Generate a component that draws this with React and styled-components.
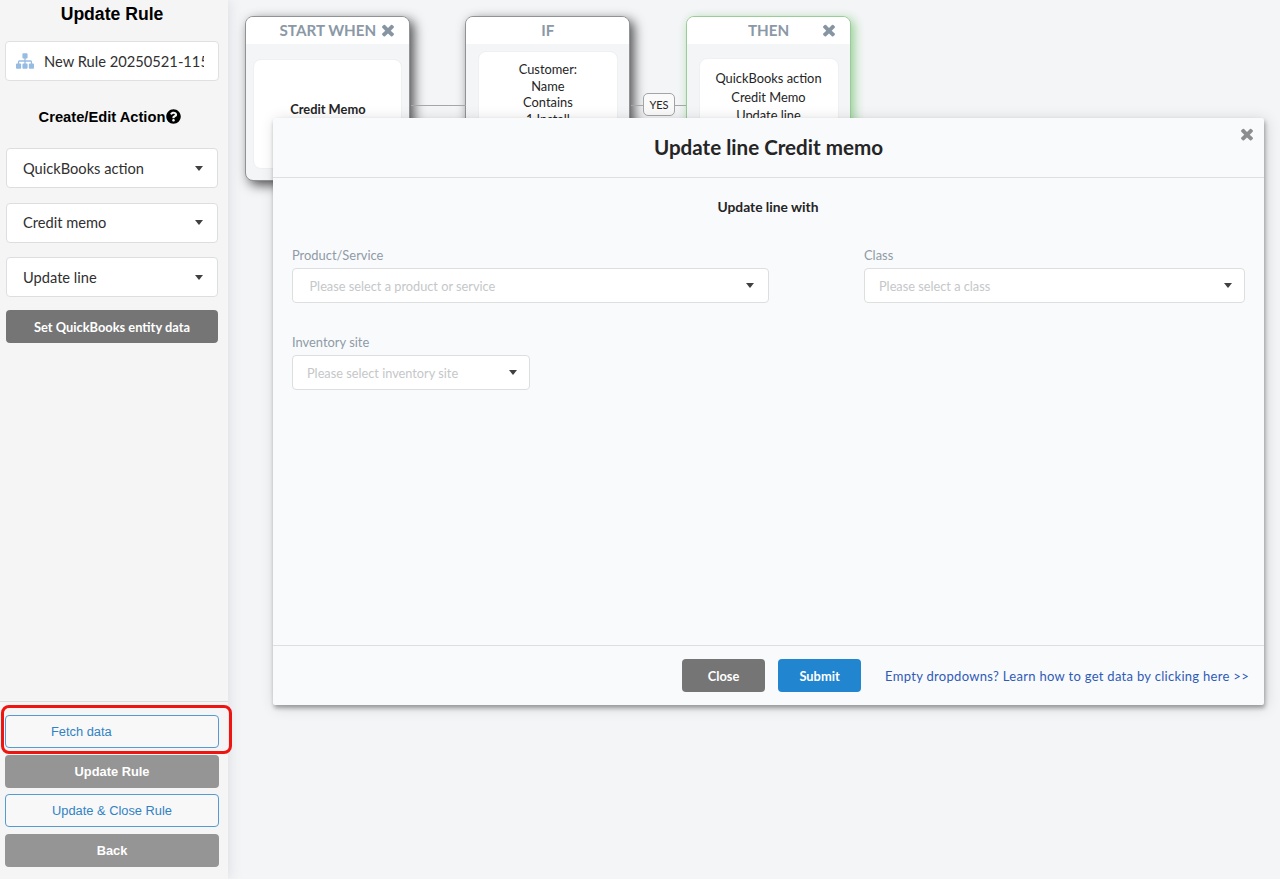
import React from 'react';
import styled, { createGlobalStyle, css } from 'styled-components';
import { FaQuestionCircle } from 'react-icons/fa';

const lato = 'Lato, "Liberation Sans", sans-serif';
const helvetica = '"Liberation Sans", Arial, sans-serif';

const GlobalStyle = createGlobalStyle`
  * { box-sizing: border-box; }
  body { margin: 0; background: #f4f5f7; color: #252525; font-family: ${lato}; overflow: hidden; }
  button { cursor: pointer; }
`;

const Page = styled.div`
  position: relative;
  display: flex;
  width: 1280px;
  height: 879px;
  overflow: hidden;
`;

/* Sidebar */

const Sidebar = styled.aside`
  position: relative;
  z-index: 1;
  display: flex;
  flex-direction: column;
  width: 228px;
  height: 100%;
  background: #f5f5f5;
  box-shadow: 2px 0 12px rgba(60, 70, 90, 0.12);
`;

const SidebarTitle = styled.h1`
  margin: 4px 4px 0 0;
  height: 37px;
  text-align: center;
  font: 700 17.6px/21px ${helvetica};
  color: #000;
`;

const RuleName = styled.div`
  display: flex;
  align-items: center;
  gap: 10px;
  width: 214px;
  height: 40px;
  margin-left: 5px;
  padding: 0 14px 0 10px;
  border: 1px solid #dfe0e1;
  border-radius: 4px;
  background: #fff;
  color: #96bce3;
  svg { flex: none; }
`;

const RuleNameText = styled.span`
  overflow: hidden;
  white-space: nowrap;
  font-size: 14.7px;
  color: #303030;
`;

const SectionHeading = styled.h2`
  display: flex;
  align-items: center;
  justify-content: center;
  gap: 1px;
  height: 20px;
  margin: 25.5px 8px 21.5px 0;
  font: 700 14.7px/20px ${helvetica};
  color: #000;
`;

const SidebarFields = styled.div`
  display: flex;
  flex-direction: column;
  gap: 14.5px;
  padding: 0 10px 0 6px;
`;

const SelectBox = styled.div`
  display: flex;
  align-items: center;
  justify-content: space-between;
  width: ${(p) => p.$width || '100%'};
  height: ${(p) => p.$height || 35}px;
  padding: 0 ${(p) => p.$padRight || 13}px 0 ${(p) => p.$padLeft || 14}px;
  border: 1px solid #dcdee0;
  border-radius: 4px;
  background: #fff;
  white-space: nowrap;
  font-size: ${(p) => p.$size || 12.75}px;
  color: ${(p) => (p.$filled ? '#303030' : '#c5c7c9')};
`;

const Caret = styled.span`
  width: 0;
  height: 0;
  border: 4px solid transparent;
  border-top: 5px solid #404040;
  border-bottom: 0;
`;

const Button = styled.button`
  display: flex;
  align-items: center;
  justify-content: center;
  width: ${(p) => p.$width || '100%'};
  height: 33px;
  padding: 0;
  border: 0;
  border-radius: 4px;
  background: ${(p) => p.$background || '#757575'};
  color: #fff;
  font: 700 12.85px ${(p) => (p.$plain ? helvetica : lato)};
  ${(p) =>
    p.$outlined &&
    css`
      border: 1px solid #559ad0;
      background: #f8f8f8;
      color: #3182c4;
      font-weight: 400;
    `}
  ${(p) =>
    p.$loading &&
    css`
      justify-content: flex-start;
      padding-left: 45px;
    `}
`;

const EntityAction = styled.div`
  padding: 13px 10px 0 6px;
`;

const SidebarFooter = styled.div`
  display: flex;
  flex-direction: column;
  gap: 6.5px;
  margin-top: auto;
  height: 178px;
  padding: 13px 9px 0 5px;
  border-top: 1px solid #dcdcdc;
`;

const Highlight = styled.div`
  position: absolute;
  z-index: 5;
  left: 1px;
  top: 705px;
  width: 231px;
  height: 49px;
  border: 3px solid #ef1410;
  border-radius: 8px;
  pointer-events: none;
`;

/* Flow canvas */

const Canvas = styled.main`
  position: relative;
  flex: 1;
`;

const Connector = styled.div`
  position: absolute;
  top: 105px;
  left: ${(p) => p.$x}px;
  width: ${(p) => p.$w}px;
  height: 1px;
  background: #a4a6a8;
`;

const Node = styled.section`
  position: absolute;
  top: 16px;
  left: ${(p) => p.$x}px;
  width: 165px;
  height: 165px;
  border: 1px solid ${(p) => (p.$active ? '#9bcb9a' : '#909295')};
  border-radius: 8px;
  background: #f4f5f7;
  box-shadow: ${(p) => (p.$active ? '3px 3px 11px #8fce8e' : '4px 4px 12px #4d4e50')};
`;

const NodeHeader = styled.header`
  display: flex;
  align-items: center;
  justify-content: center;
  height: 27px;
  padding-bottom: 2px;
  border-radius: 7px 7px 0 0;
  background: #fff;
  color: #8b98a6;
  font-size: 15.2px;
  font-weight: 700;
  white-space: nowrap;
`;

const NodeClose = styled.span`
  position: absolute;
  right: 12px;
  top: 4px;
  display: flex;
  color: #8795a3;
`;

const NodeCard = styled.div`
  display: flex;
  flex-direction: column;
  align-items: center;
  width: ${(p) => p.$w}px;
  height: ${(p) => p.$h}px;
  margin: ${(p) => p.$top}px auto 0;
  padding-top: ${(p) => p.$pad}px;
  overflow: hidden;
  border: 1px solid #eff0f1;
  border-radius: 8px;
  background: #fff;
  font-size: 12.85px;
  font-weight: ${(p) => (p.$strong ? 700 : 400)};
  line-height: ${(p) => p.$line || 18}px;
  white-space: nowrap;
`;

const Branch = styled.span`
  position: absolute;
  left: 415px;
  top: 93px;
  display: flex;
  align-items: center;
  justify-content: center;
  width: 32px;
  height: 23px;
  padding-bottom: 1px;
  border: 1px solid #a2a4a6;
  border-radius: 5px;
  background: #fafafa;
  font-size: 11px;
`;

/* Dialog */

const Dialog = styled.div`
  position: absolute;
  z-index: 3;
  left: 273px;
  top: 118px;
  display: flex;
  flex-direction: column;
  width: 991px;
  height: 587px;
  border-radius: 2px;
  background: #f9fafc;
  box-shadow: 1px 3px 4px rgba(0, 0, 0, 0.32), 2px 2px 15px rgba(0, 0, 0, 0.15);
`;

const DialogHeader = styled.header`
  position: relative;
  height: 60px;
  border-bottom: 1px solid #dddfe1;
`;

const DialogTitle = styled.h2`
  margin: 0;
  padding-top: 16px;
  text-align: center;
  font-size: 20.6px;
  line-height: 26px;
`;

const DialogClose = styled.span`
  position: absolute;
  right: 8px;
  top: 7px;
  display: flex;
  color: #8b8d8f;
`;

const DialogBody = styled.div`
  flex: 1;
  padding: 19px 19px 0;
`;

const Subtitle = styled.h3`
  margin: 0 0 30px -1px;
  text-align: center;
  font-size: 13.8px;
  line-height: 20px;
`;

const FieldRow = styled.div`
  display: flex;
  justify-content: space-between;
  margin-bottom: 31px;
`;

const Field = styled.label`
  display: block;
  width: ${(p) => p.$w}px;
`;

const FieldLabel = styled.span`
  display: block;
  height: 21px;
  font-size: 12.9px;
  line-height: 16px;
  color: #8f9aa6;
`;

const DialogFooter = styled.footer`
  display: flex;
  align-items: center;
  justify-content: flex-end;
  gap: 13px;
  height: 60px;
  padding-right: 15px;
  border-top: 1px solid #dddfe1;
`;

const HelpLink = styled.a`
  margin-left: 11px;
  font-size: 13px;
  letter-spacing: 0.3px;
  white-space: nowrap;
  color: #2f5bb7;
`;

const CloseIcon = () => (
  <svg width="18" height="18" viewBox="0 0 1792 1792" fill="currentColor">
    <path d="M1490 1322q0 40-28 68l-136 136q-28 28-68 28t-68-28l-294-294-294 294q-28 28-68 28t-68-28l-136-136q-28-28-28-68t28-68l294-294-294-294q-28-28-28-68t28-68l136-136q28-28 68-28t68 28l294 294 294-294q28-28 68-28t68 28l136 136q28 28 28 68t-28 68l-294 294 294 294q28 28 28 68z" />
  </svg>
);

const SitemapIcon = () => (
  <svg width="18" height="18" viewBox="0 0 1792 1792" fill="currentColor">
    <path d="M1792 1248v320q0 40-28 68t-68 28h-320q-40 0-68-28t-28-68v-320q0-40 28-68t68-28h96v-192h-512v192h96q40 0 68 28t28 68v320q0 40-28 68t-68 28h-320q-40 0-68-28t-28-68v-320q0-40 28-68t68-28h96v-192h-512v192h96q40 0 68 28t28 68v320q0 40-28 68t-68 28h-320q-40 0-68-28t-28-68v-320q0-40 28-68t68-28h96v-192q0-52 38-90t90-38h512v-192h-96q-40 0-68-28t-28-68v-320q0-40 28-68t68-28h320q40 0 68 28t28 68v320q0 40-28 68t-68 28h-96v192h512q52 0 90 38t38 90v192h96q40 0 68 28t28 68z" />
  </svg>
);

const Select = ({ children, ...rest }) => (
  <SelectBox {...rest}>
    <span>{children}</span>
    <Caret />
  </SelectBox>
);

const sidebarValues = ['QuickBooks action', 'Credit memo', 'Update line'];

export default function App() {
  return (
    <Page>
      <GlobalStyle />
      <Sidebar>
        <SidebarTitle>Update Rule</SidebarTitle>
        <RuleName>
          <SitemapIcon />
          <RuleNameText>New Rule 20250521-115</RuleNameText>
        </RuleName>
        <SectionHeading>
          Create/Edit Action
          <FaQuestionCircle size={15} />
        </SectionHeading>
        <SidebarFields>
          {sidebarValues.map((value) => (
            <Select key={value} $filled $height={40} $size={14.65} $padLeft={16} $padRight={14}>
              {value}
            </Select>
          ))}
        </SidebarFields>
        <EntityAction>
          <Button>Set QuickBooks entity data</Button>
        </EntityAction>
        <SidebarFooter>
          <Button $plain $outlined $loading>Fetch data</Button>
          <Button $plain $background="#959595">Update Rule</Button>
          <Button $plain $outlined>Update &amp; Close Rule</Button>
          <Button $plain $background="#959595">Back</Button>
        </SidebarFooter>
      </Sidebar>

      <Canvas>
        <Node $x={17.4}>
          <NodeHeader>
            START WHEN
            <NodeClose><CloseIcon /></NodeClose>
          </NodeHeader>
          <NodeCard $strong $w={149} $h={110} $top={15} $pad={40}>
            <span>Credit Memo</span>
          </NodeCard>
        </Node>
        <Node $x={237.4}>
          <NodeHeader>IF</NodeHeader>
          <NodeCard $w={140} $h={120} $top={7} $pad={9} $line={16.5}>
            <span>Customer:</span>
            <span>Name</span>
            <span>Contains</span>
            <span>1 Install</span>
          </NodeCard>
        </Node>
        <Node $x={458} $active>
          <NodeHeader>
            THEN
            <NodeClose><CloseIcon /></NodeClose>
          </NodeHeader>
          <NodeCard $w={140} $h={110} $top={14} $pad={10} $line={18.5}>
            <span>QuickBooks action</span>
            <span>Credit Memo</span>
            <span>Update line</span>
          </NodeCard>
        </Node>
        <Connector $x={183} $w={55} />
        <Connector $x={403} $w={55} />
        <Branch>YES</Branch>
      </Canvas>

      <Dialog>
        <DialogHeader>
          <DialogTitle>Update line Credit memo</DialogTitle>
          <DialogClose><CloseIcon /></DialogClose>
        </DialogHeader>
        <DialogBody>
          <Subtitle>Update line with</Subtitle>
          <FieldRow>
            <Field $w={477}>
              <FieldLabel>Product/Service</FieldLabel>
              <Select $padLeft={16.5} $padRight={14}>Please select a product or service</Select>
            </Field>
            <Field $w={381}>
              <FieldLabel>Class</FieldLabel>
              <Select $padRight={12}>Please select a class</Select>
            </Field>
          </FieldRow>
          <Field $w={238}>
            <FieldLabel>Inventory site</FieldLabel>
            <Select $padRight={12}>Please select inventory site</Select>
          </Field>
        </DialogBody>
        <DialogFooter>
          <Button $width="83px">Close</Button>
          <Button $width="83px" $background="#2185d0">Submit</Button>
          <HelpLink>Empty dropdowns? Learn how to get data by clicking here &gt;&gt;</HelpLink>
        </DialogFooter>
      </Dialog>
      <Highlight />
    </Page>
  );
}
